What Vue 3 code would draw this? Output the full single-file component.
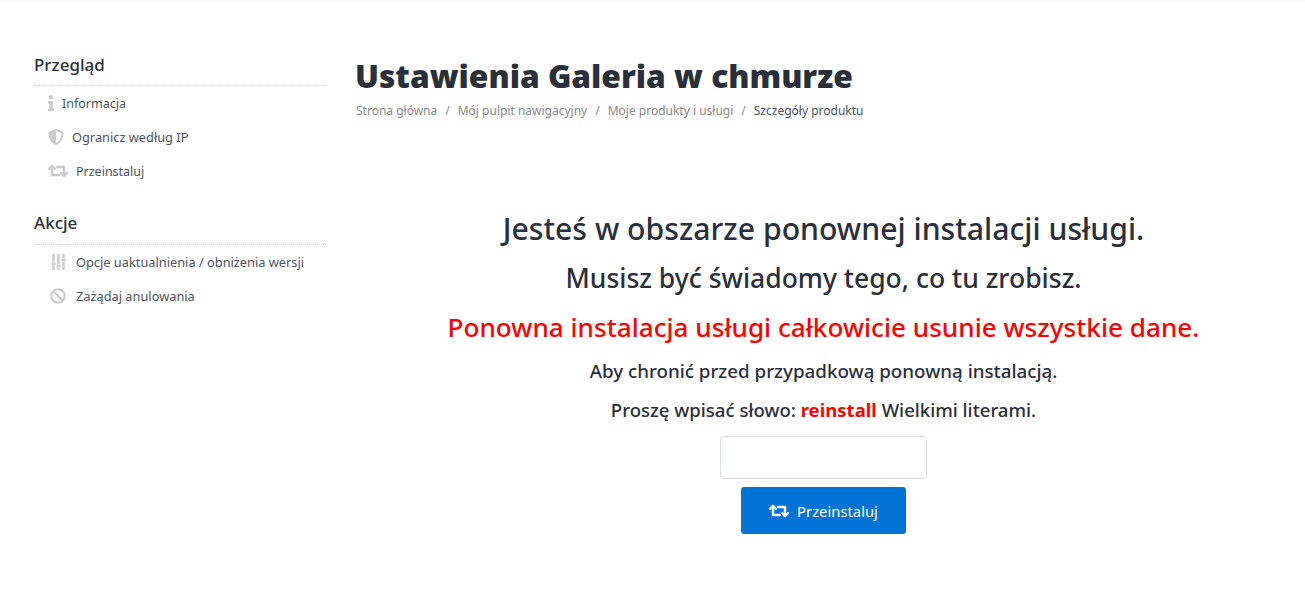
<template>
  <div class="page">
    <aside class="sidebar">
      <section class="side-group">
        <h3 class="side-title">Przegląd</h3>
        <a class="side-link">
          <svg class="ico ico-info" viewBox="0 0 192 512"><path d="M20 424.229h20V279.771H20c-11.046 0-20-8.954-20-20V212c0-11.046 8.954-20 20-20h112c11.046 0 20 8.954 20 20v212.229h20c11.046 0 20 8.954 20 20V492c0 11.046-8.954 20-20 20H20c-11.046 0-20-8.954-20-20v-47.771c0-11.046 8.954-20 20-20zM96 0C56.235 0 24 32.235 24 72s32.235 72 72 72 72-32.235 72-72S135.764 0 96 0z"/></svg>
          <span>Informacja</span>
        </a>
        <a class="side-link">
          <svg class="ico ico-shield" viewBox="0 0 512 512"><path d="M466.5 83.7l-192-80a48.15 48.15 0 0 0-36.9 0l-192 80C27.7 91.1 16 108.6 16 128c0 198.5 114.5 335.7 221.5 380.3 11.8 4.9 25.1 4.9 36.9 0C360.1 472.6 496 349.3 496 128c0-19.4-11.7-36.9-29.5-44.3zM256.1 446.3l-.1-381 175.9 73.3c-3.3 151.4-82.1 261.1-175.8 307.7z"/></svg>
          <span class="wide-text">Ogranicz według IP</span>
        </a>
        <a class="side-link">
          <svg class="ico ico-wide ico-heavy" viewBox="0 0 640 512"><path :d="retweet"/></svg>
          <span>Przeinstaluj</span>
        </a>
      </section>

      <section class="side-group">
        <h3 class="side-title">Akcje</h3>
        <a class="side-link">
          <svg class="ico ico-wide" viewBox="0 0 20 16">
            <path d="M4.300 0h2.400v8H4.300zM4.300 12h2.400v4H4.300zM9.300 0h2.400v10H9.300zM9.300 14h2.400v2H9.300zM14.300 0h2.400v4h-2.400zM14.300 8h2.400v8h-2.400zM3.500 8.500h4v3h-4zM8.500 10.500h4v3h-4zM13.500 4.500h4v3h-4z"/>
          </svg>
          <span class="wide-text">Opcje uaktualnienia / obniżenia wersji</span>
        </a>
        <a class="side-link">
          <svg class="ico ico-wide" viewBox="0 0 512 512"><path d="M256 8C119.034 8 8 119.033 8 256s111.034 248 248 248 248-111.034 248-248S392.967 8 256 8zm130.108 117.892c65.448 65.448 70 165.481 20.677 235.637L150.470 105.216c70.204-49.356 170.226-44.735 235.638 20.676zM125.892 386.108c-65.448-65.448-70-165.481-20.677-235.637L361.530 406.784c-70.203 49.356-170.226 44.736-235.638-20.676z"/></svg>
          <span class="wide-text">Zażądaj anulowania</span>
        </a>
      </section>
    </aside>

    <main class="main">
      <h1 class="page-title">Ustawienia Galeria w chmurze</h1>
      <nav class="crumbs">
        <template v-for="(c, i) in crumbs" :key="c">
          <span v-if="i" class="sep">/</span>
          <span :class="{ current: i === crumbs.length - 1 }">{{ c }}</span>
        </template>
      </nav>

      <div class="notice">
        <h2 class="l1">Jesteś w obszarze ponownej instalacji usługi.</h2>
        <h3 class="l2">Musisz być świadomy tego, co tu zrobisz.</h3>
        <h3 class="l3">Ponowna instalacja usługi całkowicie usunie wszystkie dane.</h3>
        <p class="l4">Aby chronić przed przypadkową ponowną instalacją.</p>
        <p class="l5">Proszę wpisać słowo: <strong>reinstall</strong> Wielkimi literami.</p>
        <input class="confirm" type="text" />
        <button class="btn">
          <svg class="btn-ico" viewBox="0 0 640 512"><path :d="retweet"/></svg>
          Przeinstaluj
        </button>
      </div>
    </main>
  </div>
</template>

<script setup>
const crumbs = ['Strona główna', 'Mój pulpit nawigacyjny', 'Moje produkty i usługi', 'Szczegóły produktu']
const retweet = 'M629.657 343.598L528.971 444.284c-9.373 9.372-24.568 9.372-33.941 0L394.343 343.598c-9.373-9.373-9.373-24.569 0-33.941l10.823-10.823c9.562-9.562 25.133-9.34 34.419.492L480 342.118V160H292.451a24.005 24.005 0 0 1-16.971-7.029l-16-16C244.361 121.851 255.069 96 276.451 96H520c13.255 0 24 10.745 24 24v222.118l40.416-42.792c9.285-9.831 24.856-10.054 34.419-.492l10.823 10.823c9.372 9.372 9.372 24.569-.001 33.941zm-265.138 15.431A23.999 23.999 0 0 0 347.548 352H160V169.881l40.416 42.792c9.286 9.831 24.856 10.054 34.419.491l10.822-10.822c9.373-9.373 9.373-24.569 0-33.941L144.971 67.716c-9.373-9.373-24.569-9.373-33.941 0L10.343 168.402c-9.373 9.373-9.373 24.569 0 33.941l10.822 10.822c9.562 9.562 25.133 9.34 34.419-.491L96 169.881V392c0 13.255 10.745 24 24 24h243.549c21.382 0 32.09-25.851 16.971-40.971l-16.001-16z'
</script>

<style>
html, body { background: #fff; }
</style>

<style scoped>
.page {
  display: flex;
  height: 607px;
  box-sizing: border-box;
  padding: 0 14px 0 34px;
  gap: 30px;
  font-family: "Noto Sans", "Open Sans", sans-serif;
  color: #2a2f3a;
  box-shadow: inset 0 2px 2px -1px rgba(0, 0, 0, 0.05);
  overflow: hidden;
}

.sidebar { width: 292px; flex: none; padding-top: 52px; }
.side-group { margin-bottom: 22px; }
.side-title {
  margin: 0;
  padding-bottom: 8px;
  font-size: 17px;
  line-height: 25px;
  font-weight: 500;
  color: #2a2f3a;
  border-bottom: 1px dotted #cfd3d8;
}
.side-group + .side-group .side-title { padding-bottom: 9px; }
.side-link {
  display: flex;
  align-items: center;
  height: 34px;
  padding-left: 14px;
  gap: 8px;
  font-size: 12.500px;
  color: #4d5561;
}
.wide-text { font-size: 12.800px; }
.ico { fill: #cbcbcb; height: 16px; flex: none; }
.ico-info { width: 6px; }
.ico-shield { width: 16px; }
.ico-wide { width: 20px; }
.ico-heavy { stroke: #cbcbcb; stroke-width: 18; }

.main { flex: 1; min-width: 0; padding-top: 55px; }
.page-title {
  margin: 0 0 0 -1px;
  font-size: 31.700px;
  line-height: 42px;
  font-weight: 900;
  color: #2a2f3a;
}
.crumbs {
  display: flex;
  gap: 8px;
  margin-top: 5px;
  font-size: 12px;
  line-height: 18px;
  color: #8a8a8a;
}
.crumbs .current { color: #4d5561; }

.notice { text-align: center; padding-top: 88px; display: flex; flex-direction: column; align-items: center; }
.notice h2, .notice h3, .notice p { margin: 0; }
.l1 { font-size: 30.200px; line-height: 42px; font-weight: 500; }
.l2 { font-size: 26.500px; line-height: 36px; font-weight: 500; margin-top: 10px !important; }
.l3 { font-size: 26.150px; line-height: 36px; font-weight: 500; color: #f00; margin-top: 13px !important; }
.l4 { font-size: 18.760px; line-height: 28px; font-weight: 500; margin-top: 12px !important; }
.l5 { font-size: 18.570px; line-height: 28px; font-weight: 500; margin-top: 11px !important; }
.l5 strong { color: #f00; font-weight: 700; }

.confirm {
  width: 207px;
  height: 43px;
  box-sizing: border-box;
  margin-top: 12px;
  border: 1px solid #d8dde8;
  border-radius: 4px;
  background: #fff;
}
.btn {
  display: flex;
  align-items: center;
  justify-content: center;
  gap: 8px;
  width: 165px;
  height: 47px;
  margin-top: 8px;
  border: 0;
  border-radius: 3px;
  background: #0373d6;
  color: #fff;
  font-family: inherit;
  font-size: 14.800px;
}
.btn-ico { width: 20px; height: 16px; fill: #fff; stroke: #fff; stroke-width: 14; }
</style>
